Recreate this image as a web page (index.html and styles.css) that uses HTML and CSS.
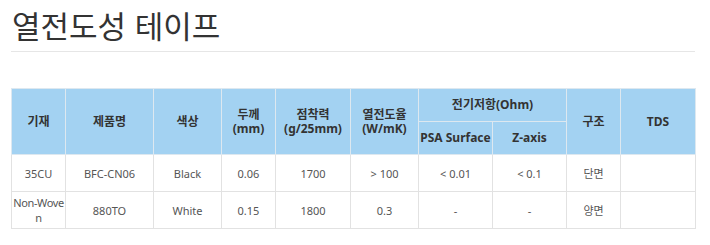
FILE: index.html
```html
<!DOCTYPE html>
<html lang="ko">
<head>
<meta charset="utf-8">
<link rel="stylesheet" href="styles.css">
</head>
<body>
<div class="page">
  <h1 class="title">열전도성 테이프</h1>
  <table class="spec">
    <colgroup>
      <col class="c1"><col class="c2"><col class="c3"><col class="c4"><col class="c5">
      <col class="c6"><col class="c7"><col class="c8"><col class="c9"><col class="c10">
    </colgroup>
    <thead>
      <tr>
        <th rowspan="2">기재</th>
        <th rowspan="2">제품명</th>
        <th rowspan="2">색상</th>
        <th rowspan="2">두께<br>(mm)</th>
        <th rowspan="2">점착력<br>(g/25mm)</th>
        <th rowspan="2">열전도율<br>(W/mK)</th>
        <th colspan="2">전기저항(Ohm)</th>
        <th rowspan="2">구조</th>
        <th rowspan="2">TDS</th>
      </tr>
      <tr>
        <th>PSA Surface</th>
        <th>Z-axis</th>
      </tr>
    </thead>
    <tbody>
      <tr>
        <td>35CU</td><td>BFC-CN06</td><td>Black</td><td>0.06</td><td>1700</td>
        <td>&gt; 100</td><td>&lt; 0.01</td><td>&lt; 0.1</td><td>단면</td><td></td>
      </tr>
      <tr>
        <td class="tight">Non-Woven</td><td>880TO</td><td>White</td><td>0.15</td><td>1800</td>
        <td>0.3</td><td>-</td><td>-</td><td>양면</td><td></td>
      </tr>
    </tbody>
  </table>
</div>
</body>
</html>
```
FILE: styles.css
```css
html, body {
  margin: 0;
  padding: 0;
  background: #fff;
}
.page {
  padding: 0 15px 0 11px;
  width: 684px;
  font-family: "Noto Sans", "Noto Sans CJK KR", sans-serif;
}
.title {
  margin: 0;
  height: 52px;
  border-bottom: 1px solid #e6e6e6;
  font-family: "Noto Sans CJK KR", sans-serif;
  font-weight: 400;
  font-size: 31px;
  line-height: 50px;
  color: #333;
  padding-left: 1px;
  box-sizing: border-box;
  margin-bottom: 36px;
}
.spec {
  width: 684px;
  border-collapse: collapse;
  table-layout: fixed;
  border-top: 1px solid #666;
}
.c1 { width: 54px; }
.c2 { width: 88px; }
.c3 { width: 68px; }
.c4 { width: 54px; }
.c5 { width: 75px; }
.c6 { width: 68px; }
.c7 { width: 74px; }
.c8 { width: 74px; }
.c9 { width: 54px; }
.c10 { width: 75px; }
.spec th {
  background: #a3d2f2;
  color: #333;
  font-size: 12px;
  font-weight: 700;
  line-height: 14px;
  height: 32px;
  padding: 0;
  border: 1px solid #dde8f0;
  text-align: center;
  vertical-align: middle;
  white-space: nowrap;
}
.spec td {
  color: #555;
  font-size: 11px;
  line-height: 15px;
  height: 36px;
  padding: 0;
  border: 1px solid #e2e2e2;
  text-align: center;
  vertical-align: middle;
  word-break: break-all;
}
.spec td.tight {
  letter-spacing: -0.4px;
}
```
